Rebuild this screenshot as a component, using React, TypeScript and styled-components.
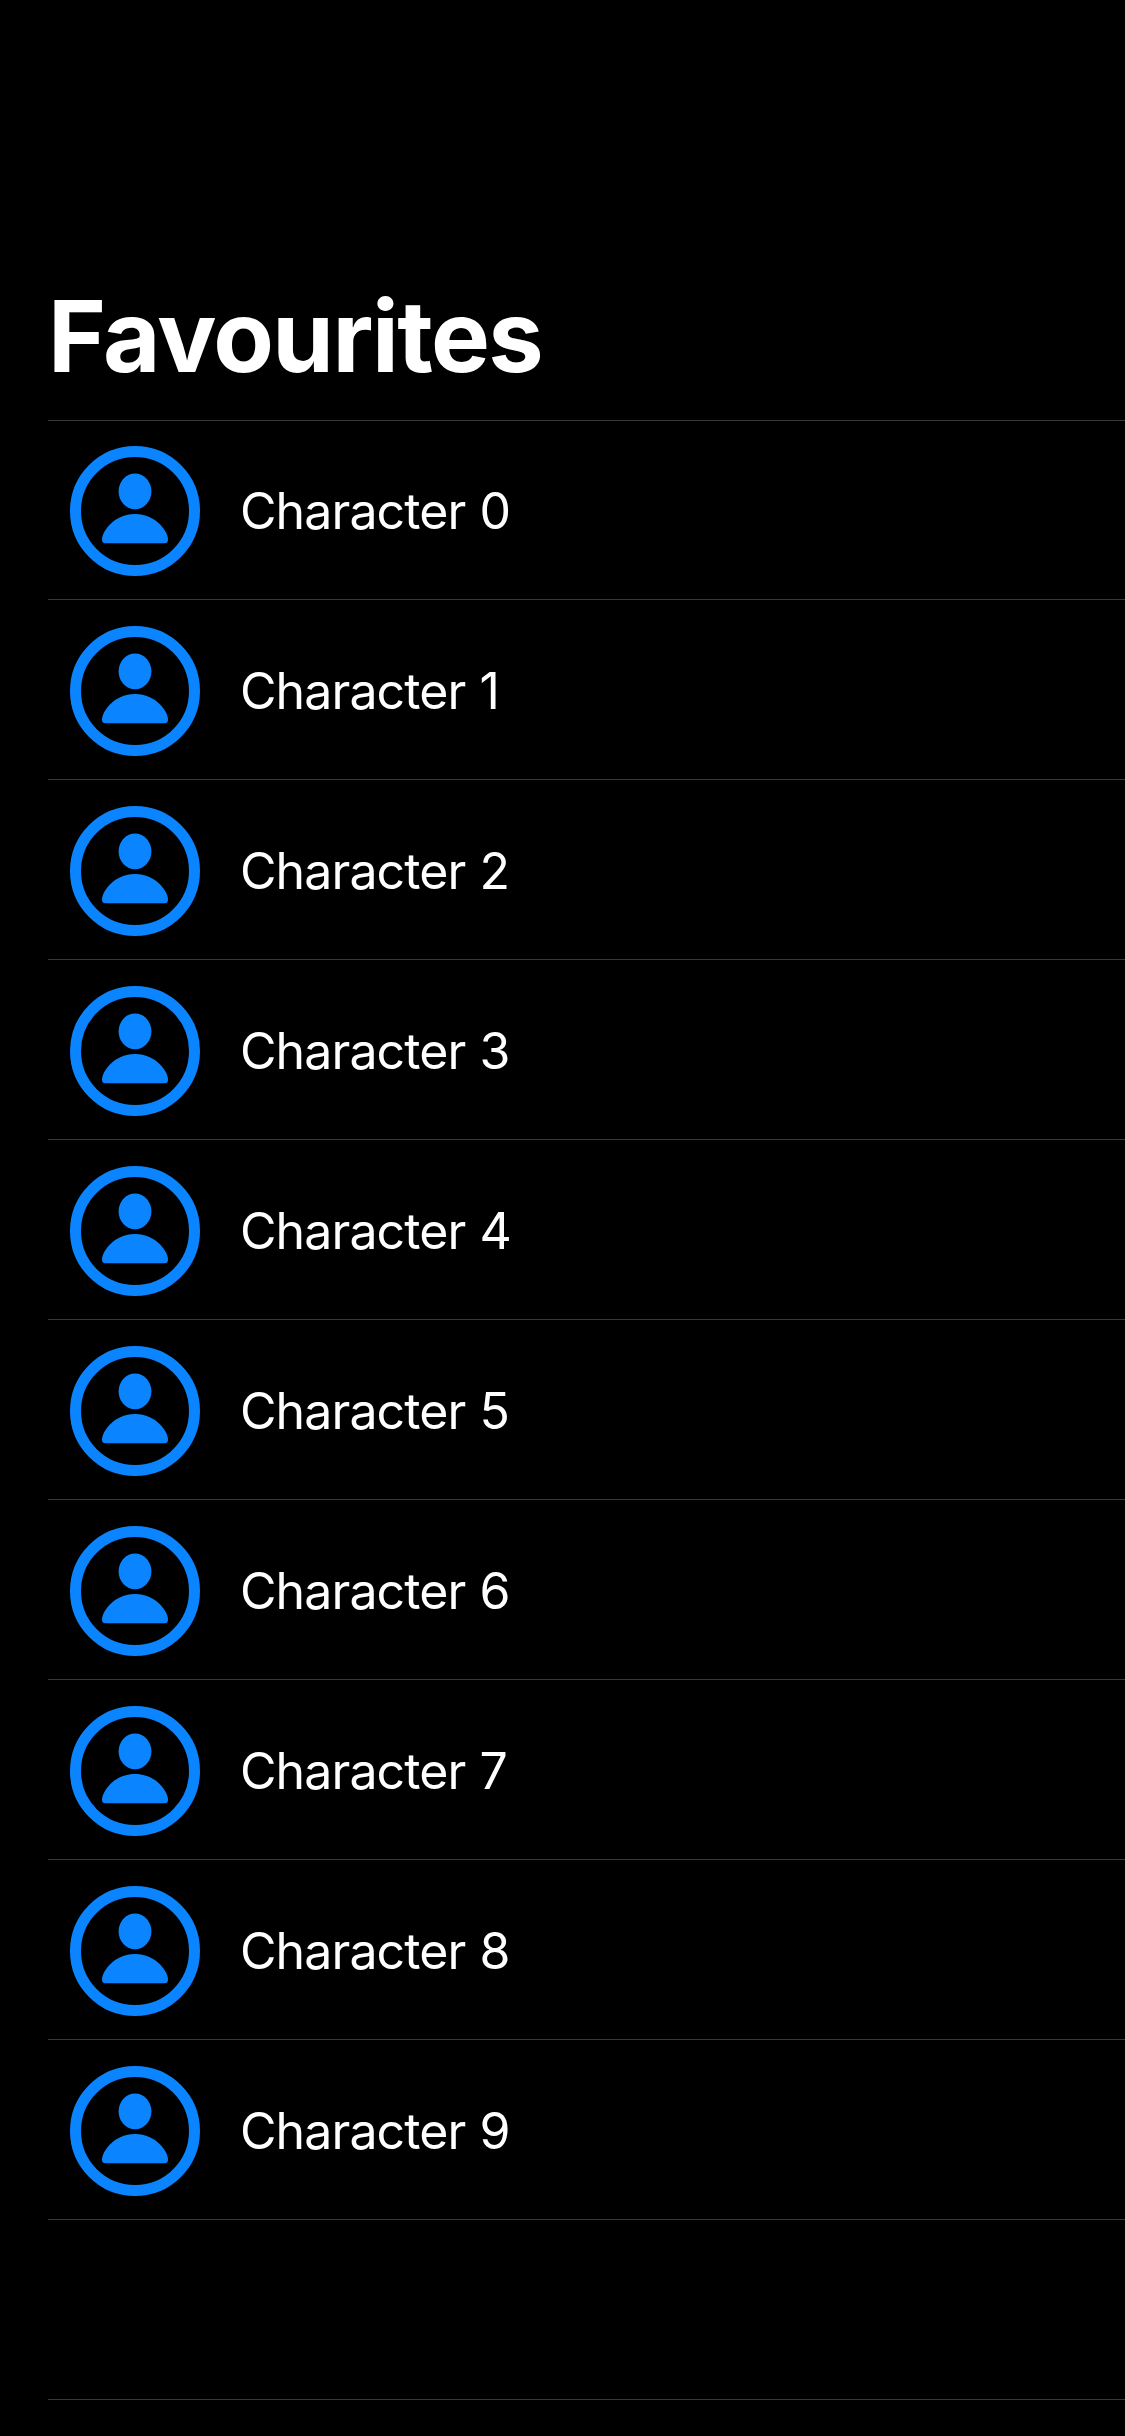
import React from "react";
import styled, { createGlobalStyle } from "styled-components";

const Global = createGlobalStyle`
  body { margin: 0; background: #000; }
  * { box-sizing: border-box; }
`;

const Screen = styled.main`
  width: 1125px;
  height: 2436px;
  overflow: hidden;
  padding: 275px 0 0 48px;
  background: #000;
  color: #fff;
  font-family: Inter, "Liberation Sans", sans-serif;
`;

const Title = styled.h1`
  margin: 0;
  height: 145px;
  font-size: 99px;
  line-height: 122px;
  font-weight: 700;
  letter-spacing: -1.55px;
  white-space: nowrap;
`;

const List = styled.ul`
  margin: 0;
  padding: 0;
  list-style: none;
  border-top: 1px solid #38383a;
`;

const Row = styled.li`
  height: 180px;
  padding: 3px 0 0 22px;
  display: flex;
  align-items: center;
  gap: 40px;
  border-bottom: 1px solid #38383a;

  &:first-child {
    height: 179px;
    padding-top: 2px;
  }
`;

const Avatar = styled.svg`
  width: 130px;
  height: 130px;
  flex: none;
`;

const Name = styled.span`
  font-size: 50px;
  line-height: 60px;
  letter-spacing: -0.9px;
  word-spacing: 1px;
  white-space: nowrap;
`;

const Person = () => (
  <Avatar viewBox="0 0 130 130" fill="#0a84ff">
    <circle cx="65" cy="65" r="59.5" fill="none" stroke="#0a84ff" strokeWidth="11" />
    <ellipse cx="65" cy="45.4" rx="16.4" ry="17.9" />
    <path d="M35.3 97.3C33 97.3 32 96 32 93.5C32 86 43.5 68 65 68S98 86 98 93.5C98 96 97 97.3 94.7 97.3Z" />
  </Avatar>
);

export default function App() {
  return (
    <Screen>
      <Global />
      <Title>Favourites</Title>
      <List>
        {Array.from({ length: 10 }, (_, i) => (
          <Row key={i}>
            <Person />
            <Name>Character {i}</Name>
          </Row>
        ))}
        <Row />
      </List>
    </Screen>
  );
}
